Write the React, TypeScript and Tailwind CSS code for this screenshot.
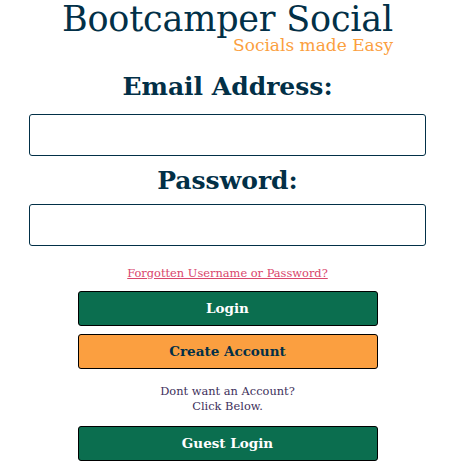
const font = { fontFamily: '"DejaVu Serif", "Liberation Serif", serif' };

function Button({ label, bg, text }: { label: string; bg: string; text: string }) {
    return (
        <button
            className={`w-[300px] h-[35px] border border-black rounded-[3px] font-bold text-[13.5px] ${bg} ${text}`}
        >
            {label}
        </button>
    );
}

export default function App() {
    return (
        <div className="w-[455px] flex flex-col items-center bg-white" style={font}>
            <div className="flex flex-col items-end">
                <h1 className="text-[35px] leading-[36px] mt-[1px] text-[#023047] -tracking-[0.2px]">Bootcamper Social</h1>
                <p className="text-[17px] leading-[18px] -mt-[1px] text-[#fb9f3f]">Socials made Easy</p>
            </div>
            <label className="mt-[16px] text-[25px] leading-[34px] font-bold text-[#023047]">Email Address:</label>
            <input className="mt-[10px] w-[397px] h-[42px] border border-[#023047] rounded-[3px]" />
            <label className="mt-[8px] text-[25px] leading-[34px] font-bold text-[#023047]">Password:</label>
            <input type="password" className="mt-[6px] w-[397px] h-[42px] border border-[#023047] rounded-[3px]" />
            <a href="#" className="mt-[19px] text-[11.4px] leading-[16px] text-[#d9466b] underline">
                Forgotten Username or Password?
            </a>
            <div className="mt-[10px] flex flex-col gap-[8px]">
                <Button label="Login" bg="bg-[#0b6e4f]" text="text-white" />
                <Button label="Create Account" bg="bg-[#fb9f40]" text="text-[#023047]" />
            </div>
            <p className="mt-[15px] text-[11.4px] leading-[15px] text-center text-[#3d2f5b]">
                Dont want an Account?
                <br />
                Click Below.
            </p>
            <div className="mt-[12px]">
                <Button label="Guest Login" bg="bg-[#0b6e4f]" text="text-white" />
            </div>
        </div>
    );
}
